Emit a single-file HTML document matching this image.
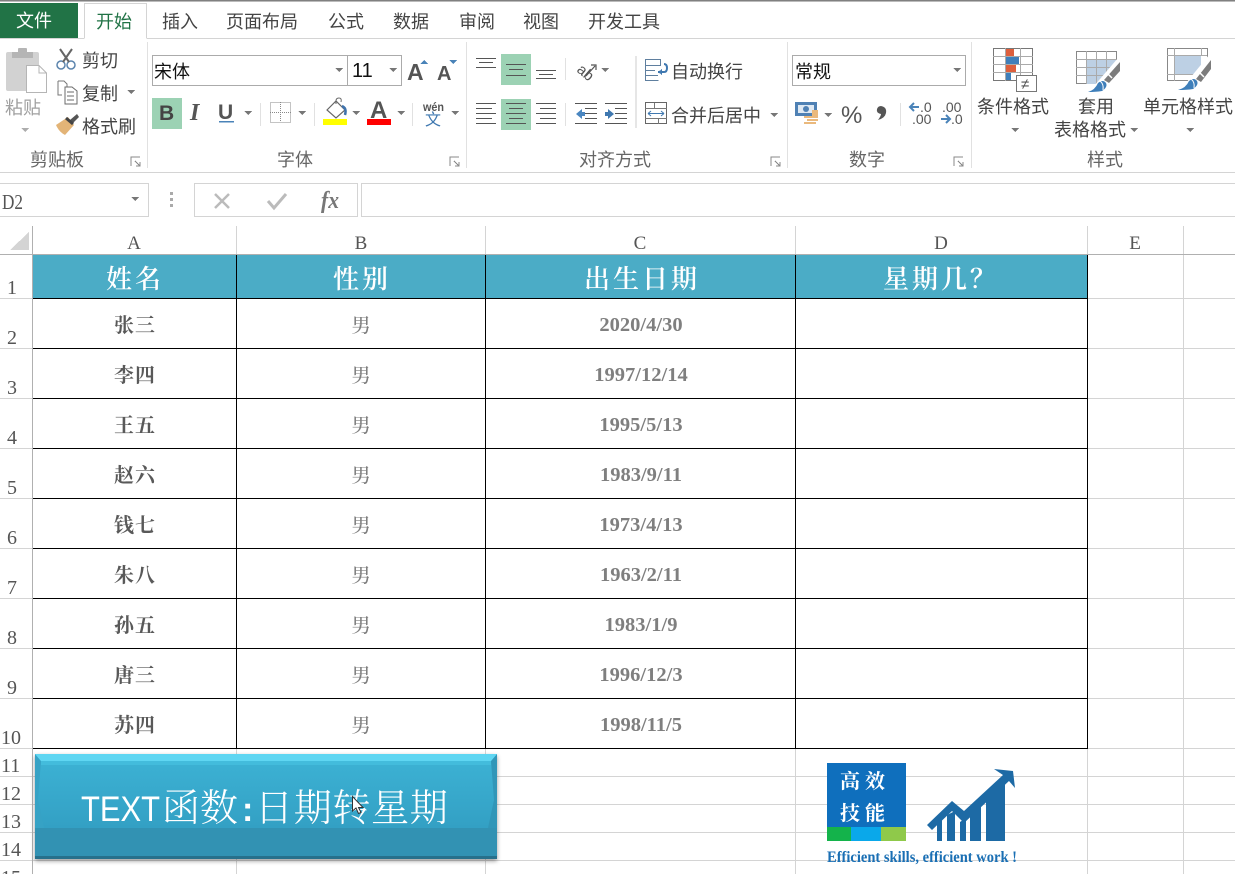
<!DOCTYPE html>
<html lang="zh"><head><meta charset="utf-8"><title>Excel</title>
<style>
html,body{margin:0;padding:0;width:1235px;height:874px;overflow:hidden;background:#fff}
svg{display:block}
text{white-space:pre}
.r{font-family:"Liberation Sans","Noto Sans CJK SC",sans-serif;font-size:18px;fill:#444}
.g{font-family:"Liberation Sans","Noto Sans CJK SC",sans-serif;font-size:18px;fill:#666}
.n{font-family:"Liberation Serif",serif;font-size:20px;fill:#555}
.c{font-family:"Liberation Serif",serif;font-size:19px;fill:#555;text-anchor:middle}
.h{font-family:"Noto Serif CJK SC",serif;font-size:26px;font-weight:600;fill:#fff;text-anchor:middle;letter-spacing:3px}
.a{font-family:"Noto Serif CJK SC",serif;font-size:20px;font-weight:700;fill:#595959;text-anchor:middle;letter-spacing:1px}
.b{font-family:"Noto Serif CJK SC",serif;font-size:19.5px;font-weight:500;fill:#7f7f7f;text-anchor:middle}
.d{font-family:"Liberation Serif",serif;font-size:20.5px;font-weight:700;fill:#7f7f7f;text-anchor:middle}
.gl{stroke:#d4d4d4;stroke-width:1}
.bl{stroke:#000;stroke-width:1}
.sp{stroke:#e1e1e1;stroke-width:1}
.ln{stroke:#555;stroke-width:1;fill:none}
</style></head><body>
<svg width="1235" height="874" viewBox="0 0 1235 874" xmlns="http://www.w3.org/2000/svg" shape-rendering="crispEdges">
<defs><path id="tri" d="M-4-2h8l-4 4z" fill="#777"/><path id="lau" d="M0 9V0h9M4 4l5 5M9 5v4H5" fill="none" stroke="#888"/></defs>

<!-- top chrome -->
<rect width="1235" height="1" fill="#808080"/>
<rect x="0" y="1" width="1235" height="1" fill="#bbb"/>
<rect x="0" y="3" width="78" height="36" fill="#217346"/>
<path d="M84.500 38.500V3.500H146.500V38.500" fill="#fff" stroke="#d4d4d4"/>
<path d="M0 38.500H84M147 38.500H1235" stroke="#d4d4d4"/>
<text class="r" x="16" y="27" style="fill:#fff">文件</text>
<text class="r" x="96" y="28" style="fill:#217346">开始</text>
<text class="r" x="162" y="28">插入</text>
<text class="r" x="226" y="28">页面布局</text>
<text class="r" x="328" y="28">公式</text>
<text class="r" x="393" y="28">数据</text>
<text class="r" x="459" y="28">审阅</text>
<text class="r" x="523" y="28">视图</text>
<text class="r" x="588" y="28">开发工具</text>

<!-- ribbon separators -->
<path class="sp" d="M147.500 42V168M466.500 42V168M787.500 42V168M971.500 42V168"/>
<rect y="172" width="1235" height="1" fill="#d4d4d4"/>

<!-- clipboard -->
<g shape-rendering="auto">
<rect x="6" y="52" width="33" height="39" rx="2" fill="#d2d2d2"/>
<rect x="12" y="52" width="21" height="6" fill="#b5b5b5"/>
<rect x="18" y="48" width="9" height="6" rx="1" fill="#b5b5b5"/>
<path d="M26.500 65.500H39L46.500 73V92.500H26.500Z" fill="#fff" stroke="#b5b5b5"/>
<path d="M39 65.500V73H46.500" fill="none" stroke="#b5b5b5"/>
<circle cx="61" cy="65" r="4" fill="none" stroke="#5b84ad" stroke-width="1.500"/>
<circle cx="71" cy="65" r="4" fill="none" stroke="#5b84ad" stroke-width="1.500"/>
<path d="M63 62 72 49M69 62 60 49" stroke="#666" stroke-width="2" fill="none"/>
<path d="M58 81H64L67 84V92" fill="#fff" stroke="#777"/><path d="M58 81V95H62" fill="none" stroke="#777"/>
<path d="M65 87H72L77 91V104H65Z" fill="#fff" stroke="#6b6b6b"/>
<path d="M67 92H74M67 96H74M67 100H74" stroke="#6b6b6b" fill="none"/>
<path d="M56 125 68 117 74 125 65 135Q59 132 56 125Z" fill="#e3b477"/>
<path d="M70 120 77 114 79 117 73 123Z" fill="#555"/>
<path d="M66 118 73 124" stroke="#444" stroke-width="3"/>
</g>
<text class="g" x="5" y="114" style="fill:#a0a0a0">粘贴</text>
<use href="#tri" x="25" y="130" style="opacity:.6"/>
<text class="r" x="82" y="67">剪切</text>
<text class="r" x="82" y="100">复制</text><use href="#tri" x="131" y="92"/>
<text class="r" x="82" y="133">格式刷</text>
<text class="g" x="30" y="166">剪贴板</text><use href="#lau" x="131" y="157"/>

<!-- font group -->
<rect x="152.500" y="55.500" width="195" height="30" fill="#fff" stroke="#ababab"/>
<rect x="347.500" y="55.500" width="54" height="30" fill="#fff" stroke="#ababab"/>
<text class="r" x="154" y="78" style="fill:#111">宋体</text><use href="#tri" x="339" y="70"/>
<text x="352" y="77" style="font:20px 'Liberation Sans',sans-serif;fill:#111">11</text><use href="#tri" x="393" y="70"/>
<text x="407" y="80" style="font:bold 23px 'Liberation Sans',sans-serif;fill:#555">A</text>
<path d="M420 64h8l-4-4z" fill="#4a83b8"/>
<text x="437" y="80" style="font:bold 20px 'Liberation Sans',sans-serif;fill:#555">A</text>
<path d="M449 60h8l-4 4z" fill="#4a83b8"/>
<rect x="152" y="98" width="30" height="31" fill="#9cd2b4"/>
<text x="159" y="120" style="font:bold 21px 'Liberation Sans',sans-serif;fill:#444">B</text>
<text x="190" y="120" style="font:italic bold 24px 'Liberation Serif',serif;fill:#555">I</text>
<text x="218" y="119" style="font:bold 21px 'Liberation Sans',sans-serif;fill:#555">U</text>
<rect x="219" y="121" width="15" height="1.500" fill="#4a83b8"/>
<use href="#tri" x="248" y="113"/>
<path class="sp" d="M260.500 103V126M314.500 103V126M412.500 103V126"/>
<rect x="270.500" y="102.500" width="20" height="20" fill="none" stroke="#888" stroke-dasharray="1 1"/>
<path d="M280.500 102V122M270 112.500H291" stroke="#888" stroke-dasharray="1 1"/>
<use href="#tri" x="302" y="113"/>
<g shape-rendering="auto">
<path d="M327 110 336 101 345 110 336 118Z" fill="#fff" stroke="#666" stroke-width="1.200"/>
<path d="M336 104V101Q336 98 339 98T341 102" fill="none" stroke="#666"/>
<path d="M342 106Q347 108 345 115" fill="none" stroke="#3f73ad" stroke-width="2.500"/>
</g>
<rect x="323" y="119" width="24" height="6" fill="#ff0"/>
<use href="#tri" x="356" y="113"/>
<text x="370" y="118" style="font:bold 24px 'Liberation Sans',sans-serif;fill:#555">A</text>
<rect x="367" y="119" width="24" height="6" fill="#f00"/>
<use href="#tri" x="401" y="113"/>
<text x="423" y="111" style="font:bold 11.500px 'Liberation Sans',sans-serif;fill:#555" textLength="21" lengthAdjust="spacingAndGlyphs">wén</text>
<text x="425" y="125" style="font:16px 'Liberation Sans','Noto Sans CJK SC',sans-serif;fill:#3f78b0">文</text>
<use href="#tri" x="455" y="113"/>
<text class="g" x="277" y="166">字体</text><use href="#lau" x="450" y="157"/>

<!-- alignment -->
<rect x="501" y="54" width="30" height="31" fill="#9cd2b4"/>
<rect x="501" y="99" width="30" height="31" fill="#9cd2b4"/>
<path class="ln" d="M476 58.500H496M479 62.500H493M476 67.500H496"/>
<path class="ln" d="M506 64.500H526M509 69.500H523M506 75.500H526"/>
<path class="ln" d="M536 70.500H556M539 74.500H553M536 78.500H556"/>
<path class="ln" d="M476 103.500H496M476 108.500H492M476 113.500H496M476 118.500H492M476 123.500H496"/>
<path class="ln" d="M506 103.500H526M509 108.500H523M506 113.500H526M509 118.500H523M506 123.500H526"/>
<path class="ln" d="M536 103.500H556M540 108.500H556M536 113.500H556M540 118.500H556M536 123.500H556"/>
<path class="sp" d="M565.500 58V80M565.500 103V126"/>
<g shape-rendering="auto">
<text x="576" y="71" transform="rotate(40 576 71)" style="font:15px 'Liberation Sans',sans-serif;fill:#555">ab</text>
<path d="M586 76 595 66M591 65H596V70" fill="none" stroke="#555" stroke-width="1.200"/>
<path d="M576 114 582 109V112H585V116H582V119Z" fill="#4a86c0"/>
<path d="M614 114 608 109V112H605V116H608V119Z" fill="#3f78b0"/>
</g>
<use href="#tri" x="605" y="70"/>
<path class="ln" d="M575 103.500H597M585 108.500H597M585 113.500H597M585 118.500H597M575 123.500H597"/>
<path class="ln" d="M605 103.500H627M615 108.500H627M615 113.500H627M615 118.500H627M605 123.500H627"/>
<rect x="635" y="56" width="2" height="72" fill="#e6e6e6"/>
<path d="M645.500 59.500H660.500V65.500H645.500ZM645.500 65.500V80.500H658.500M645.500 70.500H655M645.500 75.500H658" fill="none" stroke="#5f7f9f"/>
<path d="M658 72H664Q667 72 667 68T664 64" fill="none" stroke="#3f78b0" stroke-width="2" shape-rendering="auto"/>
<path d="M658 72l4-3v6z" fill="#3f78b0"/>
<rect x="645.500" y="102.500" width="21" height="21" fill="none" stroke="#666"/>
<path d="M645 108.500H667M645 118.500H667M654.500 103V108M658.500 118V124" stroke="#777"/>
<path d="M648 113.500H664M648 113.500l3-2.500M648 113.500l3 2.500M664 113.500l-3-2.500M664 113.500l-3 2.500" stroke="#3f78b0" fill="none" shape-rendering="auto"/>
<text class="r" x="671" y="78">自动换行</text>
<text class="r" x="671" y="122">合并后居中</text><use href="#tri" x="774" y="115"/>
<text class="g" x="579" y="166">对齐方式</text><use href="#lau" x="771" y="157"/>

<!-- number -->
<rect x="792.500" y="55.500" width="173" height="30" fill="#fff" stroke="#ababab"/>
<text class="r" x="795" y="78" style="fill:#111">常规</text><use href="#tri" x="957" y="70"/>
<rect x="795" y="102" width="22" height="14" fill="#4f81b4"/>
<rect x="798" y="105" width="16" height="8" fill="#dfe9f3"/>
<circle cx="806" cy="109" r="3" fill="#4f81b4" shape-rendering="auto"/>
<path d="M804 116h14v2h-14zM807 119h11v2h-11zM804 122h12v2h-12z" fill="#eab97d"/>
<path d="M812 110h6v6h-6z" fill="#eab97d"/>
<use href="#tri" x="828" y="115"/>
<text x="841" y="123" style="font:24px 'Liberation Sans',sans-serif;fill:#555">%</text>
<path d="M881 106Q887 107 886 113Q885 118 878 120Q881 116 881 114Q876 113 877 109Q878 106 881 106Z" fill="#555" shape-rendering="auto"/>
<path class="sp" d="M900.500 103V126"/>
<g style="font:14px 'Liberation Sans',sans-serif;fill:#555">
<text x="920" y="112">.0</text><text x="912" y="124">.00</text>
<text x="942" y="112">.00</text><text x="951" y="124">.0</text>
</g>
<g shape-rendering="auto" fill="none" stroke="#4a83b8" stroke-width="2">
<path d="M919 107H911M914 103 910 107 914 111"/>
<path d="M941 119H949M946 115 950 119 946 123"/>
</g>
<text class="g" x="849" y="166">数字</text><use href="#lau" x="954" y="157"/>

<!-- styles -->
<rect x="993.500" y="48.500" width="39" height="32" fill="#fff" stroke="#777"/>
<path d="M993 56.500H1033M993 64.500H1033M993 72.500H1033M1005.500 48V81M1020.500 48V81" stroke="#aaa"/>
<rect x="1006" y="49" width="8" height="7" fill="#dd5f3c"/>
<rect x="1006" y="57" width="13" height="7" fill="#3f7fba"/>
<rect x="1006" y="65" width="10" height="7" fill="#dd5f3c"/>
<rect x="1006" y="73" width="5" height="7" fill="#3f7fba"/>
<rect x="1016.500" y="75.500" width="20" height="16" fill="#fff" stroke="#777"/>
<text x="1021" y="89" style="font:15px 'Liberation Sans',sans-serif;fill:#555">≠</text>

<rect x="1076.500" y="51.500" width="40" height="32" fill="#fff" stroke="#888"/>
<rect x="1087" y="59" width="29" height="25" fill="#bdd0e4"/>
<path d="M1076 59.500H1116M1076 67.500H1116M1076 75.500H1116M1086.500 51V84M1096.500 51V84M1106.500 51V84" stroke="#aaa"/>
<rect x="1167.500" y="48.500" width="40" height="32" fill="#fff" stroke="#888"/>
<rect x="1175" y="56" width="26" height="18" fill="#bdd0e4"/>
<path d="M1167 55.500H1207M1167 74.500H1207M1174.500 48V81M1201.500 48V56" stroke="#aaa"/>
<g shape-rendering="auto">
<path d="M1118 58V86H1094Z" fill="#fff"/>
<path d="M1104 80 1120 62V71L1109 83Z" fill="#7c7c7c"/>
<path d="M1108 74 1112 78" stroke="#fff" stroke-width="1.500"/>
<path d="M1088 92Q1095 90 1098 83Q1103 79 1106 83Q1108 87 1102 91Q1096 92 1088 92Z" fill="#3f7fba"/>
<path d="M1100 81Q1104 84 1103 90" fill="none" stroke="#fff"/>
<path d="M1209 55V83H1186Z" fill="#fff"/>
<path d="M1196 79 1211 60V69L1201 82Z" fill="#7c7c7c"/>
<path d="M1200 73 1204 77" stroke="#fff" stroke-width="1.500"/>
<path d="M1178 90Q1186 88 1189 81Q1194 77 1197 81Q1199 85 1193 89Q1187 90 1178 90Z" fill="#3f7fba"/>
<path d="M1191 79Q1195 82 1194 88" fill="none" stroke="#fff"/>
</g>
<text class="r" x="977" y="113">条件格式</text><use href="#tri" x="1015" y="130"/>
<text class="r" x="1078" y="113">套用</text>
<text class="r" x="1054" y="136">表格格式</text><use href="#tri" x="1134" y="130"/>
<text class="r" x="1143" y="113">单元格样式</text><use href="#tri" x="1190" y="130"/>
<text class="g" x="1087" y="166">样式</text>

<!-- formula bar -->
<rect x="-1.500" y="183.500" width="150" height="33" fill="#fff" stroke="#d4d4d4"/>
<text x="2" y="209" style="font:21px 'Liberation Serif',serif;fill:#555" textLength="21" lengthAdjust="spacingAndGlyphs">D2</text>
<use href="#tri" x="135" y="199"/>
<path d="M170 192h3v3h-3zM170 198h3v3h-3zM170 204h3v3h-3z" fill="#aaa"/>
<rect x="194.500" y="183.500" width="163" height="33" fill="#fff" stroke="#d4d4d4"/>
<rect x="361.500" y="183.500" width="880" height="33" fill="#fff" stroke="#d4d4d4"/>
<path d="M215 194 229 208M229 194 215 208" stroke="#bbb" stroke-width="2.500" shape-rendering="auto"/>
<path d="M268 201 274 208 286 194" fill="none" stroke="#bbb" stroke-width="3" shape-rendering="auto"/>
<text x="321" y="208" style="font:italic bold 24px 'Liberation Serif',serif;fill:#777" textLength="18" lengthAdjust="spacingAndGlyphs">fx</text>

<!-- sheet grid -->
<rect x="33" y="255" width="1054" height="43" fill="#4bacc6"/>
<path d="M10 250H29V232Z" fill="#d4d4d4"/>
<path class="gl" d="M236.500 226V254M485.500 226V254M795.500 226V254M1087.500 226V254M1183.500 226V874
M1087 298.500H1235M1087 348.500H1235M1087 398.500H1235M1087 448.500H1235M1087 498.500H1235M1087 548.500H1235M1087 598.500H1235M1087 648.500H1235M1087 698.500H1235
M0 298.500H32M0 348.500H32M0 398.500H32M0 448.500H32M0 498.500H32M0 548.500H32M0 598.500H32M0 648.500H32M0 698.500H32M0 748.500H32
M0 776.500H1235M0 804.500H1235M0 832.500H1235M0 860.500H1235M1087 748.500H1235
M236.500 749V874M485.500 749V874M795.500 749V874M1087.500 749V874"/>
<path d="M0 254.500H1235" stroke="#b0b0b0"/>
<path d="M32.500 226V874" stroke="#b0b0b0"/>
<path class="bl" d="M33 298.500H1088M33 348.500H1088M33 398.500H1088M33 448.500H1088M33 498.500H1088M33 548.500H1088M33 598.500H1088M33 648.500H1088M33 698.500H1088M33 748.500H1088
M236.500 255V749M485.500 255V749M795.500 255V749M1087.500 255V749"/>

<text class="c" x="134" y="249">A</text><text class="c" x="361" y="249">B</text><text class="c" x="640" y="249">C</text><text class="c" x="941" y="249">D</text><text class="c" x="1135" y="249">E</text>
<text class="n" x="7" y="294">1</text><text class="n" x="7" y="344">2</text><text class="n" x="7" y="394">3</text><text class="n" x="7" y="444">4</text><text class="n" x="7" y="494">5</text><text class="n" x="7" y="544">6</text><text class="n" x="7" y="594">7</text><text class="n" x="7" y="644">8</text><text class="n" x="7" y="694">9</text>
<text class="n" x="1" y="744">10</text><text class="n" x="1" y="772">11</text><text class="n" x="1" y="800">12</text><text class="n" x="1" y="828">13</text><text class="n" x="1" y="856">14</text><text class="n" x="1" y="884">15</text>

<text class="h" x="135" y="288">姓名</text><text class="h" x="362" y="288">性别</text><text class="h" x="642" y="288">出生日期</text><text class="h" x="941" y="288">星期几？</text>

<text class="a" x="135" y="332">张三</text><text class="b" x="361" y="332">男</text><text class="d" x="641" y="331">2020/4/30</text>
<text class="a" x="135" y="382">李四</text><text class="b" x="361" y="382">男</text><text class="d" x="641" y="381">1997/12/14</text>
<text class="a" x="135" y="432">王五</text><text class="b" x="361" y="432">男</text><text class="d" x="641" y="431">1995/5/13</text>
<text class="a" x="135" y="482">赵六</text><text class="b" x="361" y="482">男</text><text class="d" x="641" y="481">1983/9/11</text>
<text class="a" x="135" y="532">钱七</text><text class="b" x="361" y="532">男</text><text class="d" x="641" y="531">1973/4/13</text>
<text class="a" x="135" y="582">朱八</text><text class="b" x="361" y="582">男</text><text class="d" x="641" y="581">1963/2/11</text>
<text class="a" x="135" y="632">孙五</text><text class="b" x="361" y="632">男</text><text class="d" x="641" y="631">1983/1/9</text>
<text class="a" x="135" y="682">唐三</text><text class="b" x="361" y="682">男</text><text class="d" x="641" y="681">1996/12/3</text>
<text class="a" x="135" y="732">苏四</text><text class="b" x="361" y="732">男</text><text class="d" x="641" y="731">1998/11/5</text>

<!-- shape button -->
<defs>
<linearGradient id="bt" x1="0" y1="0" x2="0" y2="1"><stop offset="0" stop-color="#3db3d5"/><stop offset="1" stop-color="#33a0c4"/></linearGradient>
<filter id="sh" x="-5%" y="-5%" width="110%" height="115%"><feDropShadow dx="0" dy="2" stdDeviation="2" flood-color="#000" flood-opacity=".4"/></filter>
</defs>
<g shape-rendering="auto">
<rect x="35" y="754" width="462" height="105" fill="#3192b3" filter="url(#sh)"/>
<path d="M35 754H497V828H35Z" fill="url(#bt)"/>
<path d="M497 754 491 761 494 800 488 828H497Z" fill="#3196b8"/>
<path d="M35 754 41 761 38 800 44 828H35Z" fill="#36a2c5"/>
<path d="M35 754H497L491 761H41Z" fill="#5fd6f2"/>
<rect x="41" y="761" width="450" height="4" fill="#43bcdc"/>
<rect x="35" y="856" width="462" height="3" fill="#27708b"/>
</g>
<text x="81" y="821" style="font:35px 'Liberation Sans',sans-serif;fill:#fff" textLength="79" lengthAdjust="spacingAndGlyphs">TEXT</text>
<text x="162" y="821" style="font:300 38px 'Noto Serif CJK SC',serif;fill:#fff">函数</text>
<text x="242" y="821" style="font:bold 34px 'Liberation Sans',sans-serif;fill:#fff">:</text>
<text x="255" y="821" style="font:300 38px 'Noto Serif CJK SC',serif;fill:#fff;letter-spacing:.7px">日期转星期</text>
<path d="M352.500 796.500V811L356 808 358.500 813.500 361 812.500 358.500 807.500H363Z" fill="#fff" stroke="#333" shape-rendering="auto"/>

<!-- logo -->
<rect x="827" y="763" width="79" height="64" fill="#0f6fbd"/>
<rect x="827" y="827" width="24" height="14" fill="#14b34b"/>
<rect x="851" y="827" width="30" height="14" fill="#0aa8ea"/>
<rect x="881" y="827" width="25" height="14" fill="#8fc94a"/>
<text x="840" y="788" style="font:700 20px 'Noto Serif CJK SC',serif;fill:#fff;letter-spacing:5px">高效</text>
<text x="840" y="820" style="font:700 20px 'Noto Serif CJK SC',serif;fill:#fff;letter-spacing:5px">技能</text>
<g shape-rendering="auto" fill="#1d6aa5">
<path d="M937 824 942 819V841H937ZM947 815 955 811V841H947Z"/>
<path d="M960 822 966 818V841H960ZM970 810 981 801V841H970ZM986 796 1005 782V841H986Z"/>
<path d="M927 825 952 801 964 811 1003 775 994 769 1013 771 1015 788 1009 781 964 823 952 811 932 830Z"/>
</g>
<text x="827" y="862" style="font:bold 16px 'Liberation Serif',serif;fill:#1a6fb4" textLength="190" lengthAdjust="spacingAndGlyphs">Efficient skills, efficient work !</text>
</svg>
</body></html>
